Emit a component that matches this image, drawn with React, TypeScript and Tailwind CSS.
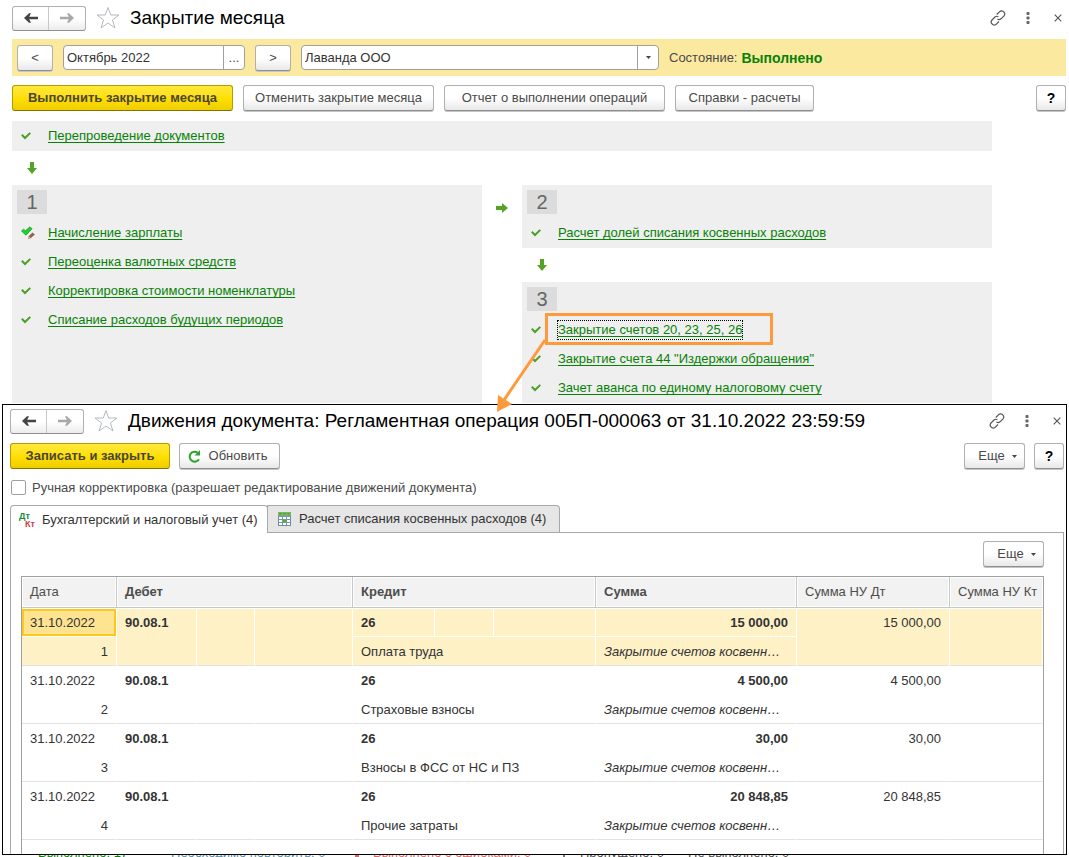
import type { ReactNode } from "react";

type Posting = {
	date: string;
	debit: string;
	credit: string;
	item: string;
	sum: string;
	taxSum: string;
};

const postings: Posting[] = [
	{ date: "31.10.2022", debit: "90.08.1", credit: "26", item: "Оплата труда", sum: "15 000,00", taxSum: "15 000,00" },
	{ date: "31.10.2022", debit: "90.08.1", credit: "26", item: "Страховые взносы", sum: "4 500,00", taxSum: "4 500,00" },
	{ date: "31.10.2022", debit: "90.08.1", credit: "26", item: "Взносы в ФСС от НС и ПЗ", sum: "30,00", taxSum: "30,00" },
	{ date: "31.10.2022", debit: "90.08.1", credit: "26", item: "Прочие затраты", sum: "20 848,85", taxSum: "20 848,85" },
];

/* icons */
const ArrowIcon = ({ className }: { className: string }) => (
	<svg width="14" height="10" viewBox="0 0 14 10" className={className}>
		<path d="M0 5 L5 0.3 H7 L5.2 3.8 H14 V6.2 H5.2 L7 9.7 H5 Z" fill="currentColor" />
	</svg>
);

const StarIcon = () => (
	<svg width="24" height="24" viewBox="0 0 24 24" fill="none" stroke="#b4bac0">
		<path d="M12 1.5 L14.7 9 H23 L16.4 14 L19 22 L12 17 L5 22 L7.6 14 L1 9 H9.3 Z" />
	</svg>
);

const LinkIcon = () => (
	<svg width="16" height="16" viewBox="0 0 16 16" fill="none" stroke="#555" strokeWidth="1.2">
		<path d="M6.8 4.5 L9.4 1.9 a2.9 2.9 0 0 1 4.6 0.2 a2.9 2.9 0 0 1 0 3.7 L11 8.8 a2.8 2.8 0 0 1 -3.6 0.2" />
		<path d="M9 11.5 L6.6 13.9 a2.9 2.9 0 0 1 -4.6 0 a2.9 2.9 0 0 1 0 -3.9 L5 7 a2.8 2.8 0 0 1 3.4 -0.2" />
	</svg>
);

const DotsIcon = () => (
	<svg width="4" height="12" viewBox="0 0 4 12" fill="#666">
		<rect x="0.5" y="0" width="3" height="3" rx="0.8" />
		<rect x="0.5" y="4.5" width="3" height="3" rx="0.8" />
		<rect x="0.5" y="9" width="3" height="3" rx="0.8" />
	</svg>
);

const CloseIcon = () => (
	<svg width="8" height="8" viewBox="0 0 8 8" stroke="#555" strokeWidth="1.1">
		<path d="M0.7 0.7 L7.3 7.3 M7.3 0.7 L0.7 7.3" />
	</svg>
);

const CheckIcon = () => (
	<svg width="10" height="8" viewBox="0 0 10 8" fill="none" stroke="#4ba024" strokeWidth="2">
		<path d="M0.8 2.8 L4 6 L9.3 0.9" />
	</svg>
);

const CheckPencilIcon = () => (
	<svg width="15" height="14" viewBox="0 0 15 14">
		<path d="M0.5 5 L2.5 3.2 L4.5 4.8 L9 0.8 L11 2.8 L5 9.2 Z" fill="#1ed030" stroke="#12a022" strokeWidth="0.8" />
		<path d="M7 13 L7.8 10 L11.5 6.5 L13.8 8.6 L10 12 Z" fill="#8b6150" />
		<path d="M7 13 L7.8 10.2 L9.6 12 Z" fill="#d8b9a0" />
	</svg>
);

const DownIcon = () => (
	<svg width="10" height="12" viewBox="0 0 10 12" fill="#56a323">
		<path d="M3 0 H7 V6 H10 L5 12 L0 6 H3 Z" />
	</svg>
);

const RightIcon = () => (
	<svg width="12" height="10" viewBox="0 0 12 10" fill="#56a323">
		<path d="M0 3 H6 V0 L12 5 L6 10 V7 H0 Z" />
	</svg>
);

const RefreshIcon = () => (
	<svg width="13" height="13" viewBox="0 0 13 13">
		<path d="M11 9.2 A5 5 0 1 1 9.6 2.6" fill="none" stroke="#2fa32f" strokeWidth="2" />
		<path d="M12 0 V5.5 H6.5 Z" fill="#2fa32f" />
	</svg>
);

const CaretIcon = () => (
	<svg width="5" height="3" viewBox="0 0 5 3" fill="#444">
		<path d="M0 0 H5 L2.5 3 Z" />
	</svg>
);

const SheetIcon = () => (
	<svg width="13" height="14" viewBox="0 0 13 14">
		<rect x="0.5" y="0.5" width="12" height="13" fill="#fff" stroke="#6f8ba0" />
		<rect x="0" y="0" width="13" height="4" fill="#7fae72" />
		<path d="M1 1 H4 L2.5 3.5 Z M5 1 H8 L6.5 3.5 Z M9 1 H12 L10.5 3.5 Z" fill="#3fb818" />
		<path d="M1 4.5 H12 M1 7.5 H12 M1 10.5 H12 M4.5 4 V13 M8.5 4 V13" stroke="#7d97aa" />
		<rect x="5" y="8" width="3" height="2" fill="#3fb818" />
	</svg>
);

/* controls */
const Button = ({ children, className = "" }: { children: ReactNode; className?: string }) => (
	<button
		className={`flex h-[26px] shrink-0 items-center justify-center rounded-[3px] border border-[#b0b0b0] border-b-[#8f8f8f] bg-linear-to-b from-white from-50% to-[#e8e8e8] whitespace-nowrap shadow-[0_1px_0_#c4c4c4] ${className}`}
	>
		{children}
	</button>
);

const PrimaryButton = ({ children, className = "" }: { children: ReactNode; className?: string }) => (
	<button
		className={`flex h-[26px] shrink-0 items-center justify-center rounded-[3px] border border-[#b39b00] border-b-[#857300] bg-linear-to-b from-[#ffe838] via-[#ffe000] to-[#efcd00] font-bold whitespace-nowrap text-[#4a4636] ${className}`}
	>
		{children}
	</button>
);

const TitleBar = ({ title }: { title: string }) => (
	<header className="flex items-center">
		<div className="flex h-[25px] rounded-[3px] border border-[#b0b0b0] border-b-[#8f8f8f] bg-linear-to-b from-white from-50% to-[#ececec]">
			<button aria-label="Назад" className="flex w-9 items-center justify-center border-r border-[#c8c8c8]">
				<ArrowIcon className="text-[#444]" />
			</button>
			<button aria-label="Вперед" className="flex w-9 items-center justify-center">
				<ArrowIcon className="rotate-180 text-[#a8a8a8]" />
			</button>
		</div>
		<button aria-label="В избранное" className="ml-[10px]">
			<StarIcon />
		</button>
		<h1 className="ml-[10px] flex-1 text-[19px] leading-[26px] whitespace-nowrap text-black">{title}</h1>
		<button aria-label="Ссылка">
			<LinkIcon />
		</button>
		<button aria-label="Меню" className="ml-5">
			<DotsIcon />
		</button>
		<button aria-label="Закрыть" className="ml-6">
			<CloseIcon />
		</button>
	</header>
);

const Operation = ({
	title,
	icon,
	focused = false,
	children,
}: {
	title: string;
	icon?: ReactNode;
	focused?: boolean;
	children?: ReactNode;
}) => (
	<li className="relative flex h-[29px] items-center">
		<span className="flex w-[27px]">{icon ?? <CheckIcon />}</span>
		<a
			href="#"
			className={`text-[#078207] underline underline-offset-2 [text-decoration-skip-ink:none] ${focused ? "outline-1 outline-dotted outline-black" : ""}`}
		>
			{title}
		</a>
		{children}
	</li>
);

const Stage = ({ number, children }: { number: number; children: ReactNode }) => (
	<section className="bg-[#efefef] pt-[5px] pb-px">
		<h2 className="ml-[5px] flex h-6 w-[30px] items-center justify-center bg-[#dcdcdc] text-[20px] text-[#666]">
			{number}
		</h2>
		<ul className="mt-1 pl-[9px]">{children}</ul>
	</section>
);

/* frame around the operation and the arrow down to its postings */
const Callout = () => (
	<>
		<span className="pointer-events-none absolute top-[-2px] left-[14px] h-8 w-[228px] border-[3px] border-[#ff9a3c]"></span>
		<svg
			width="52"
			height="74"
			viewBox="0 0 52 74"
			className="pointer-events-none absolute top-[24px] left-[-36px] z-20"
		>
			<path d="M50 1 L9 61" stroke="#ff9a3c" strokeWidth="3" fill="none" />
			<path d="M2 73 L3 56 L17 65 Z" fill="#ff9a3c" />
		</svg>
	</>
);

const MonthClosing = () => (
	<main>
		<div className="pt-[5px] pr-[7px] pl-3">
			<TitleBar title="Закрытие месяца" />
		</div>

		{/* period and organization */}
		<div className="mt-2 mr-[3px] ml-3 flex h-[37px] items-center bg-[#fce9a0] px-[5px]">
			<Button className="w-9">&lt;</Button>
			<div className="ml-[10px] flex h-[25px] w-[182px] rounded-[4px] border border-[#a0a0a0] bg-white">
				<input aria-label="Период" defaultValue="Октябрь 2022" className="min-w-0 flex-1 pl-[3px] text-[#333]" />
				<button aria-label="Выбрать период" className="w-[21px] border-l border-[#a0a0a0]">
					...
				</button>
			</div>
			<Button className="ml-[10px] w-9">&gt;</Button>
			<div className="ml-[10px] flex h-[25px] w-[358px] rounded-[4px] border border-[#a0a0a0] bg-white">
				<input aria-label="Организация" defaultValue="Лаванда ООО" className="min-w-0 flex-1 pl-[3px] text-[#333]" />
				<button
					aria-label="Выбрать организацию"
					className="flex w-[21px] items-center justify-center border-l border-[#a0a0a0]"
				>
					<CaretIcon />
				</button>
			</div>
			<p className="ml-[10px]">Состояние:</p>
			<p className="ml-1 text-[14px] font-bold text-[#078207]">Выполнено</p>
		</div>

		{/* commands */}
		<div className="mt-[9px] mr-[3px] ml-3 flex gap-[10px]">
			<PrimaryButton className="w-[221px]">Выполнить закрытие месяца</PrimaryButton>
			<Button className="w-[191px]">Отменить закрытие месяца</Button>
			<Button className="w-[221px]">Отчет о выполнении операций</Button>
			<Button className="w-[139px]">Справки - расчеты</Button>
			<Button className="ml-auto w-[30px] text-[14px] font-bold text-black">?</Button>
		</div>

		{/* stages */}
		<div className="mt-[10px] mb-px ml-3 max-w-[980px]">
			<ul className="bg-[#efefef] pb-px pl-[9px]">
				<Operation title="Перепроведение документов" />
			</ul>
			<div className="flex h-[34px] items-center pl-[15px]">
				<DownIcon />
			</div>
			<div className="grid grid-cols-[1fr_40px_1fr]">
				<Stage number={1}>
					<Operation title="Начисление зарплаты" icon={<CheckPencilIcon />} />
					<Operation title="Переоценка валютных средств" />
					<Operation title="Корректировка стоимости номенклатуры" />
					<Operation title="Списание расходов будущих периодов" />
				</Stage>
				<div className="flex justify-center pt-[18px]">
					<RightIcon />
				</div>
				<div>
					<Stage number={2}>
						<Operation title="Расчет долей списания косвенных расходов" />
					</Stage>
					<div className="flex h-[34px] items-center pl-[15px]">
						<DownIcon />
					</div>
					<Stage number={3}>
						<Operation title="Закрытие счетов 20, 23, 25, 26" focused>
							<Callout />
						</Operation>
						<Operation title={'Закрытие счета 44 "Издержки обращения"'} />
						<Operation title="Зачет аванса по единому налоговому счету" />
					</Stage>
				</div>
			</div>
		</div>
	</main>
);

const PostingRows = ({ posting, index }: { posting: Posting; index: number }) => {
	const selected = index === 0;
	const top = selected ? "border border-l-0 border-white bg-[#fef1c6]" : "border border-l-0 border-transparent";
	const bottom = selected
		? "border-r border-b border-r-white border-b-[#e2e2e2] bg-[#fef1c6]"
		: "border-r border-b border-r-transparent border-b-[#e2e2e2]";
	/* cells that take both rows of the record */
	const tall = `border-t ${selected ? "border-t-white" : "border-t-transparent"} ${bottom}`;

	return (
		<>
			<tr className="h-[29px]">
				<td className={`p-0 ${top}`}>
					<div
						className={`flex h-[27px] items-center ${selected ? "border-2 border-[#fcc81e] bg-[#fee391] px-[6px]" : "px-2"}`}
					>
						{posting.date}
					</div>
				</td>
				<td rowSpan={2} className={`px-2 pt-[5px] align-top font-bold ${tall}`}>
					{posting.debit}
				</td>
				<td rowSpan={2} className={tall}></td>
				<td rowSpan={2} className={tall}></td>
				<td className={`px-2 font-bold ${top}`}>{posting.credit}</td>
				<td className={top}></td>
				<td className={top}></td>
				<td className={`px-2 text-right font-bold ${top}`}>{posting.sum}</td>
				<td rowSpan={2} className={`px-2 pt-[5px] text-right align-top ${tall}`}>
					{posting.taxSum}
				</td>
				<td rowSpan={2} className={tall}></td>
			</tr>
			<tr className="h-[29px]">
				<td className={`px-2 pt-[2px] text-right ${bottom}`}>{index + 1}</td>
				<td colSpan={3} className={`px-2 pt-[2px] ${bottom}`}>
					{posting.item}
				</td>
				<td className={`px-2 pt-[2px] italic ${bottom}`}>Закрытие счетов косвенн…</td>
			</tr>
		</>
	);
};

const headCell =
	"border-r border-b border-[#c8c8c8] bg-[#f2f2f2] px-2 text-left shadow-[inset_0_0_0_1px_#fff] whitespace-nowrap";

const DocumentPostings = () => (
	<section className="relative z-10 mx-[2px] border border-black bg-white">
		<div className="pt-[3px] pr-[5px] pl-[7px]">
			<TitleBar title="Движения документа: Регламентная операция 00БП-000063 от 31.10.2022 23:59:59" />
		</div>

		<div className="mt-[9px] mr-[2px] ml-[7px] flex gap-[9px]">
			<PrimaryButton className="w-[160px]">Записать и закрыть</PrimaryButton>
			<Button className="w-[101px] gap-2 pr-1">
				<RefreshIcon />
				Обновить
			</Button>
			<Button className="ml-auto w-[61px] gap-[7px] pl-[6px]">
				Еще
				<CaretIcon />
			</Button>
			<Button className="w-[30px] text-[14px] font-bold text-black">?</Button>
		</div>

		<label className="mt-[11px] ml-2 flex h-[15px] items-center gap-[6px]">
			<input type="checkbox" className="size-[15px] appearance-none rounded-[2px] border border-[#a0a0a0] bg-white" />
			Ручная корректировка (разрешает редактирование движений документа)
		</label>

		{/* tabs */}
		<div role="tablist" className="mt-[10px] ml-[7px] flex h-[27px]">
			<button
				role="tab"
				aria-selected="true"
				className="z-10 -mb-px flex w-[258px] items-center rounded-t-[4px] border border-b-0 border-[#a8a8a8] bg-white pl-2 whitespace-nowrap text-[#333]"
			>
				<span className="mr-[7px] flex flex-col text-[9px] leading-[8px] font-bold">
					<span className="text-left text-[#128a3e]">Дт</span>
					<span className="pl-[6px] text-[#d8393f]">Кт</span>
				</span>
				Бухгалтерский и налоговый учет (4)
			</button>
			<button
				role="tab"
				aria-selected="false"
				className="-ml-px flex w-[293px] items-center gap-2 rounded-tr-[4px] border border-b-0 border-[#a8a8a8] bg-[#e6e6e6] pl-[10px] whitespace-nowrap text-[#333]"
			>
				<SheetIcon />
				Расчет списания косвенных расходов (4)
			</button>
		</div>

		<div className="mr-[2px] ml-[7px] border border-b-0 border-[#a8a8a8] pt-2 pr-[19px] pl-[10px]">
			<div className="flex justify-end">
				<Button className="w-[61px] gap-[7px] pl-[6px]">
					Еще
					<CaretIcon />
				</Button>
			</div>
			<div className="mt-[9px] border border-b-0 border-[#a0a0a0] pb-[14px]">
				<table className="w-full table-fixed border-separate border-spacing-0 text-[#333]">
					<colgroup>
						<col className="w-[95px]" />
						<col className="w-[80px]" />
						<col className="w-[58px]" />
						<col className="w-[98px]" />
						<col className="w-[82px]" />
						<col className="w-[59px]" />
						<col className="w-[102px]" />
						<col className="w-[201px]" />
						<col className="w-[153px]" />
						<col />
					</colgroup>
					<thead>
						<tr className="h-[31px] text-[#4d4d4d]">
							<th className={`${headCell} font-normal`}>Дата</th>
							<th colSpan={3} className={`${headCell} font-bold`}>
								Дебет
							</th>
							<th colSpan={3} className={`${headCell} font-bold`}>
								Кредит
							</th>
							<th className={`${headCell} font-bold`}>Сумма</th>
							<th className={`${headCell} font-normal`}>Сумма НУ Дт</th>
							<th className={`${headCell} border-r-0 pr-0 font-normal`}>Сумма НУ Кт</th>
						</tr>
					</thead>
					<tbody>
						{postings.map((posting, index) => (
							<PostingRows key={posting.item} posting={posting} index={index} />
						))}
					</tbody>
				</table>
			</div>
		</div>
	</section>
);

/* totals line, mostly covered by the document window */
const Totals = () => (
	<footer className="flex h-[2px] items-end overflow-hidden pl-[38px] leading-[9px] whitespace-nowrap">
		<span className="w-[133px] text-[#078207]">Выполнено: 17</span>
		<span className="w-[184px] text-[#5a8ba0]">Необходимо повторить: 0</span>
		<span className="mr-[14px] h-[2px] w-1 bg-[#e06666]"></span>
		<span className="w-[190px] text-[#e06666]">Выполнено с ошибками: 0</span>
		<span className="mr-[15px] h-[2px] w-[2px] bg-[#777]"></span>
		<span className="w-[108px]">Пропущено: 0</span>
		<span>Не выполнено: 0</span>
	</footer>
);

const App = () => {
	return (
		<div className="overflow-x-hidden bg-white font-['Liberation_Sans',Arial,sans-serif] text-[13px] leading-[18px] text-[#4a4a4a]">
			<MonthClosing />
			<DocumentPostings />
			<Totals />
		</div>
	);
};

export default App;
